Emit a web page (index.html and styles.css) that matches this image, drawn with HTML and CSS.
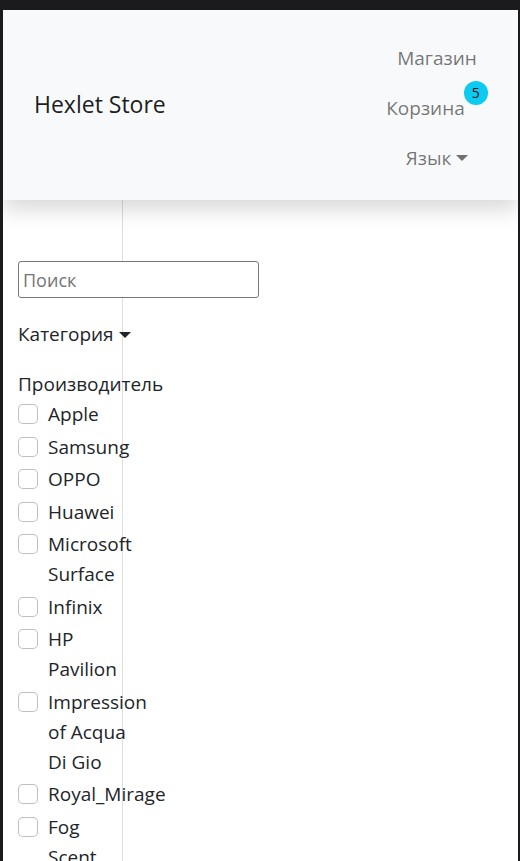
FILE: index.html
```html
<!DOCTYPE html>
<html lang="ru">
<head>
<meta charset="utf-8">
<title>Hexlet Store</title>
<link rel="stylesheet" href="styles.css">
</head>
<body>
<div class="page">
  <nav class="navbar">
    <a class="brand" href="#">Hexlet Store</a>
    <ul class="nav">
      <li><a class="nav-link" href="#">Магазин</a></li>
      <li><a class="nav-link cart" href="#"><span>Корзина</span><span class="badge">5</span></a></li>
      <li><a class="nav-link dropdown" href="#"><span>Язык</span><span class="caret"></span></a></li>
    </ul>
  </nav>
  <div class="main">
    <aside class="sidebar">
      <input class="search" type="text" placeholder="Поиск">
      <div class="category">Категория<span class="caret dark"></span></div>
      <div class="maker-title">Производитель</div>
      <div class="checks">
        <label class="form-check"><span class="box"></span><span class="text">Apple</span></label>
        <label class="form-check"><span class="box"></span><span class="text">Samsung</span></label>
        <label class="form-check"><span class="box"></span><span class="text">OPPO</span></label>
        <label class="form-check"><span class="box"></span><span class="text">Huawei</span></label>
        <label class="form-check"><span class="box"></span><span class="text">Microsoft Surface</span></label>
        <label class="form-check"><span class="box"></span><span class="text">Infinix</span></label>
        <label class="form-check"><span class="box"></span><span class="text">HP Pavilion</span></label>
        <label class="form-check"><span class="box"></span><span class="text">Impression of Acqua Di Gio</span></label>
        <label class="form-check"><span class="box"></span><span class="text">Royal_Mirage</span></label>
        <label class="form-check"><span class="box"></span><span class="text">Fog Scent</span></label>
      </div>
    </aside>
    <section class="content"></section>
  </div>
</div>
</body>
</html>
```

FILE: styles.css
```css
html, body {
  margin: 0;
  height: 100%;
}
body {
  background: #1b1b1d;
  padding: 10px 2px 0 3px;
  box-sizing: border-box;
  font-family: "Open Sans", "Noto Sans", sans-serif;
  font-size: 19px;
  line-height: 30px;
  color: #212529;
  overflow: hidden;
}
.page {
  background: #fff;
  height: 851px;
  display: flex;
  flex-direction: column;
  overflow: hidden;
}
.navbar {
  display: flex;
  align-items: center;
  justify-content: space-between;
  background: #f8f9fa;
  padding: 23px 15px 17px 31px;
  box-shadow: 0 10px 20px rgba(0, 0, 0, 0.15);
  position: relative;
  z-index: 1;
  flex: none;
}
.brand {
  font-size: 23px;
  line-height: 36px;
  margin-bottom: 9px;
  color: rgba(0, 0, 0, 0.9);
  text-decoration: none;
}
.nav {
  list-style: none;
  margin: 0;
  padding: 0;
  width: 132px;
  display: flex;
  flex-direction: column;
  align-items: center;
}
.nav-link {
  display: flex;
  align-items: center;
  padding: 10px 0;
  color: rgba(0, 0, 0, 0.55);
  text-decoration: none;
}
.nav-link.cart {
  align-items: flex-start;
}
.badge {
  width: 24px;
  height: 24px;
  border-radius: 50%;
  background: #0dcaf0;
  color: #111;
  font-size: 14px;
  line-height: 24px;
  text-align: center;
  margin-top: -12px;
  margin-left: -1px;
}
.caret {
  display: inline-block;
  width: 0;
  height: 0;
  border-top: 6px solid rgba(0, 0, 0, 0.55);
  border-left: 6px solid transparent;
  border-right: 6px solid transparent;
  margin-left: 5px;
}
.caret.dark {
  border-top-color: #212529;
  vertical-align: 3px;
}
.main {
  flex: 1;
  display: flex;
}
.sidebar {
  width: 120px;
  box-sizing: border-box;
  border-right: 1px solid #dcdfe2;
  padding: 61px 0 0 15px;
  flex: none;
}
.search {
  display: block;
  width: 241px;
  height: 37px;
  box-sizing: border-box;
  border: 1px solid #767676;
  border-radius: 3px;
  padding: 1px 4px;
  margin: 0 0 21px 0;
  font-family: inherit;
  font-size: 18px;
  color: #212529;
  background: #fff;
}
.search::placeholder {
  color: #757575;
}
.category {
  white-space: nowrap;
  margin-bottom: 20px;
}
.maker-title {
  white-space: nowrap;
}
.checks {
  width: 114px;
}
.form-check {
  display: flex;
  gap: 10px;
  margin-bottom: 2.5px;
}
.box {
  flex: none;
  width: 20px;
  height: 20px;
  box-sizing: border-box;
  border: 1px solid rgba(0, 0, 0, 0.25);
  border-radius: 5px;
  margin-top: 5px;
  background: #fff;
}
.text {
  width: 84px;
}
.content {
  flex: 1;
}
```
